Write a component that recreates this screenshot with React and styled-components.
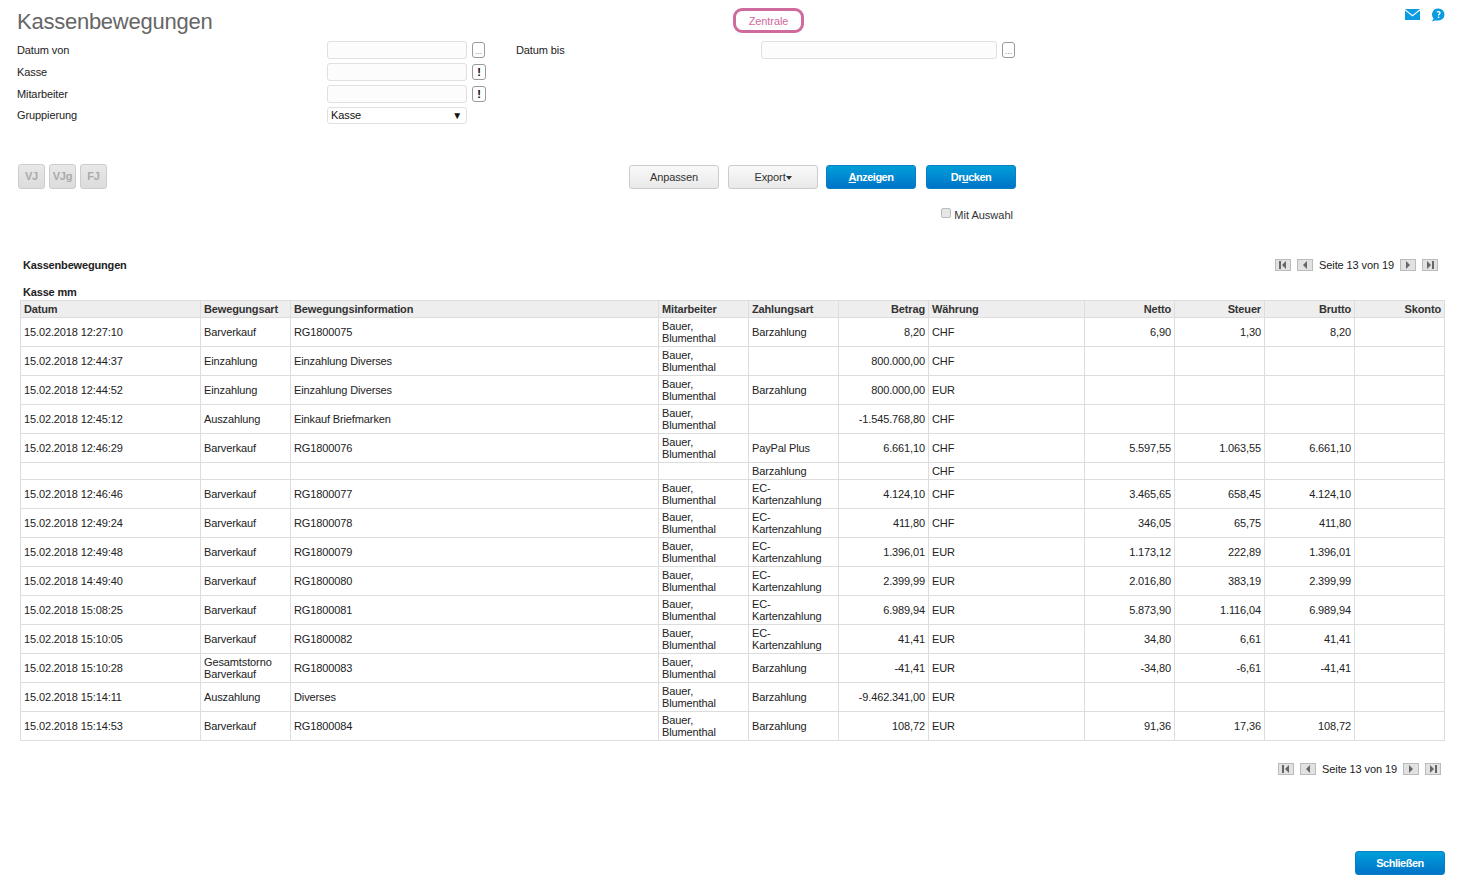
import React from "react";
import styled, { createGlobalStyle } from "styled-components";

const rows = [
  { datum: "15.02.2018 12:27:10", art: "Barverkauf", info: "RG1800075", ma: true, zahl: "Barzahlung", betrag: "8,20", wg: "CHF", netto: "6,90", steuer: "1,30", brutto: "8,20" },
  { datum: "15.02.2018 12:44:37", art: "Einzahlung", info: "Einzahlung Diverses", ma: true, betrag: "800.000,00", wg: "CHF" },
  { datum: "15.02.2018 12:44:52", art: "Einzahlung", info: "Einzahlung Diverses", ma: true, zahl: "Barzahlung", betrag: "800.000,00", wg: "EUR" },
  { datum: "15.02.2018 12:45:12", art: "Auszahlung", info: "Einkauf Briefmarken", ma: true, betrag: "-1.545.768,80", wg: "CHF" },
  { datum: "15.02.2018 12:46:29", art: "Barverkauf", info: "RG1800076", ma: true, zahl: "PayPal Plus", betrag: "6.661,10", wg: "CHF", netto: "5.597,55", steuer: "1.063,55", brutto: "6.661,10" },
  { zahl: "Barzahlung", wg: "CHF", sub: true },
  { datum: "15.02.2018 12:46:46", art: "Barverkauf", info: "RG1800077", ma: true, zahl: "EC-Kartenzahlung", betrag: "4.124,10", wg: "CHF", netto: "3.465,65", steuer: "658,45", brutto: "4.124,10" },
  { datum: "15.02.2018 12:49:24", art: "Barverkauf", info: "RG1800078", ma: true, zahl: "EC-Kartenzahlung", betrag: "411,80", wg: "CHF", netto: "346,05", steuer: "65,75", brutto: "411,80" },
  { datum: "15.02.2018 12:49:48", art: "Barverkauf", info: "RG1800079", ma: true, zahl: "EC-Kartenzahlung", betrag: "1.396,01", wg: "EUR", netto: "1.173,12", steuer: "222,89", brutto: "1.396,01" },
  { datum: "15.02.2018 14:49:40", art: "Barverkauf", info: "RG1800080", ma: true, zahl: "EC-Kartenzahlung", betrag: "2.399,99", wg: "EUR", netto: "2.016,80", steuer: "383,19", brutto: "2.399,99" },
  { datum: "15.02.2018 15:08:25", art: "Barverkauf", info: "RG1800081", ma: true, zahl: "EC-Kartenzahlung", betrag: "6.989,94", wg: "EUR", netto: "5.873,90", steuer: "1.116,04", brutto: "6.989,94" },
  { datum: "15.02.2018 15:10:05", art: "Barverkauf", info: "RG1800082", ma: true, zahl: "EC-Kartenzahlung", betrag: "41,41", wg: "EUR", netto: "34,80", steuer: "6,61", brutto: "41,41" },
  { datum: "15.02.2018 15:10:28", art: "Gesamtstorno Barverkauf", info: "RG1800083", ma: true, zahl: "Barzahlung", betrag: "-41,41", wg: "EUR", netto: "-34,80", steuer: "-6,61", brutto: "-41,41" },
  { datum: "15.02.2018 15:14:11", art: "Auszahlung", info: "Diverses", ma: true, zahl: "Barzahlung", betrag: "-9.462.341,00", wg: "EUR" },
  { datum: "15.02.2018 15:14:53", art: "Barverkauf", info: "RG1800084", ma: true, zahl: "Barzahlung", betrag: "108,72", wg: "EUR", netto: "91,36", steuer: "17,36", brutto: "108,72" },
];

const columns = [180, 90, 368, 90, 90, 90, 156, 90, 90, 90, 90];

const GlobalStyle = createGlobalStyle`
  html, body {
    margin: 0;
    padding: 0;
    background: #fff;
  }
  body {
    font-family: "Liberation Sans", Arial, sans-serif;
    font-size: 11px;
    letter-spacing: -0.1px;
    color: #222;
  }
`;

const Page = styled.div`
  width: 1458px;
  height: 880px;
  overflow: hidden;
  box-sizing: border-box;
  padding: 8px 13px 0 17px;
`;

const Header = styled.header`
  display: grid;
  grid-template-columns: 716px 71px 1fr;
  height: 31px;
`;

const Title = styled.h1`
  margin: 0;
  font-size: 22px;
  font-weight: normal;
  letter-spacing: -0.25px;
  line-height: 28px;
  color: #666;
`;

const Badge = styled.div`
  box-sizing: border-box;
  height: 25px;
  border: 3px solid #cf6a9d;
  border-radius: 9px;
  color: #cf6a9d;
  line-height: 20px;
  text-align: center;
`;

const TopIcons = styled.div`
  display: flex;
  justify-content: flex-end;
  gap: 11px;
  svg {
    display: block;
  }
`;

const FormGrid = styled.div`
  display: grid;
  grid-template-columns: 310px 140px 49px 245px 236px 20px;
  grid-template-rows: 22px 22px 22px 20px;
  align-items: center;
`;

const Label = styled.label`
  grid-column: ${(p) => p.$col || 1};
`;

const Field = styled.input`
  box-sizing: border-box;
  width: 100%;
  height: 18px;
  margin: 0;
  border: 1px solid #e0e0e0;
  border-radius: 3px;
  background: #fcfcfc;
`;

const FakeSelect = styled.div`
  box-sizing: border-box;
  height: 17px;
  margin-top: 1px;
  display: flex;
  align-items: center;
  justify-content: space-between;
  padding: 0 4px 1px 3px;
  border: 1px solid #e0e0e0;
  border-radius: 3px;
  color: #111;
  font-size: 11px;
  span:last-child {
    font-size: 10px;
  }
`;

const SmallButton = styled.button`
  display: flex;
  align-items: ${(p) => (p.$bold ? "center" : "flex-end")};
  justify-content: center;
  box-sizing: border-box;
  width: ${(p) => (p.$bold ? 14 : 13)}px;
  height: 16px;
  margin: 0 0 0 5px;
  padding: 0;
  border: 1px solid #999;
  border-radius: 3px;
  background: #fff;
  color: ${(p) => (p.$bold ? "#000" : "#888")};
  font-family: inherit;
  font-size: ${(p) => (p.$bold ? 11 : 9)}px;
  font-weight: ${(p) => (p.$bold ? "bold" : "normal")};
  line-height: 12px;
`;

const Toolbar = styled.div`
  display: flex;
  align-items: center;
  margin-top: 39px;
  width: 999px;
  height: 25px;
`;

const JournalGroup = styled.div`
  display: flex;
  gap: 4px;
  margin-left: 1px;
  margin-right: auto;
`;

const JournalButton = styled.button`
  box-sizing: border-box;
  width: 27px;
  height: 25px;
  padding: 0 0 2px;
  border: 1px solid #ccc;
  border-radius: 3px;
  background: linear-gradient(#e8e8e8, #dcdcdc);
  color: #aaa;
  font-family: inherit;
  font-size: 11px;
  font-weight: bold;
  letter-spacing: -0.2px;
`;

const ActionGroup = styled.div`
  display: flex;
  align-items: flex-end;
  height: 25px;
`;

const ActionButton = styled.button`
  box-sizing: border-box;
  width: 90px;
  height: 24px;
  margin-left: ${(p) => p.$gap || 0}px;
  padding: 0;
  border: 1px solid ${(p) => (p.$primary ? "#0a7fc4" : "#ccc")};
  border-radius: 3px;
  background: ${(p) =>
    p.$primary ? "linear-gradient(#009fd9, #0073c8)" : "linear-gradient(#f9f9f9, #e9e9e9)"};
  color: ${(p) => (p.$primary ? "#fff" : "#333")};
  font-family: inherit;
  font-size: 11px;
  font-weight: ${(p) => (p.$primary ? "bold" : "normal")};
  letter-spacing: ${(p) => (p.$primary ? "-0.5px" : "-0.1px")};
`;

const Caret = styled.span`
  display: inline-block;
  margin-bottom: 1px;
  vertical-align: middle;
  border-left: 3px solid transparent;
  border-right: 3px solid transparent;
  border-top: 4px solid #333;
`;

const CheckRow = styled.label`
  display: flex;
  justify-content: flex-end;
  align-items: flex-start;
  width: 996px;
  height: 16px;
  margin-top: 18px;
  line-height: 16px;
  letter-spacing: 0;
  color: #333;
`;

const CheckBox = styled.input`
  appearance: none;
  box-sizing: border-box;
  width: 10px;
  height: 10px;
  margin: 1px 3px 0 0;
  border: 1px solid #bbb;
  border-radius: 2px;
  background: #e6e6e6;
`;

const ReportBar = styled.div`
  display: flex;
  justify-content: space-between;
  align-items: center;
  height: 16px;
  margin-top: 34px;
  padding: 0 7px 0 6px;
`;

const ReportTitle = styled.div`
  font-weight: bold;
  letter-spacing: -0.17px;
  color: #222;
`;

const GroupTitle = styled(ReportTitle)`
  height: 14px;
  margin: 12px 0 0 6px;
  line-height: 14px;
`;

const PagerWrap = styled.div`
  display: flex;
  align-items: center;
  gap: 6px;
`;

const PagerText = styled.span`
  color: #222;
`;

const PagerButton = styled.button`
  box-sizing: border-box;
  display: flex;
  align-items: center;
  justify-content: center;
  width: 16px;
  height: 12px;
  padding: 0;
  border: 1px solid #bbb;
  background: #e2e2e2;
  svg {
    display: block;
  }
`;

const Table = styled.table`
  table-layout: fixed;
  border-collapse: collapse;
  width: 1424px;
  margin-left: 3px;
  margin-top: 1px;
  border: 1px solid #ddd;
`;

const HeadCell = styled.th`
  box-sizing: border-box;
  height: 17px;
  padding: 0 3px;
  border: 1px solid #ddd;
  background: #eee;
  color: #333;
  font-size: 11px;
  font-weight: bold;
  letter-spacing: -0.15px;
  text-align: ${(p) => (p.$right ? "right" : "left")};
`;

const Cell = styled.td`
  box-sizing: border-box;
  height: ${(p) => (p.$sub ? 17 : 29)}px;
  padding: 0 3px;
  border: 1px solid #ddd;
  color: #222;
  font-size: 11px;
  letter-spacing: -0.12px;
  line-height: 12px;
  vertical-align: middle;
  text-align: ${(p) => (p.$right ? "right" : "left")};
`;

const BottomPager = styled(ReportBar)`
  margin-top: 20px;
  padding-right: 4px;
`;

const Footer = styled.div`
  display: flex;
  justify-content: flex-end;
  margin-top: 74px;
`;

const Mail = () => (
  <svg width="15" height="11" viewBox="0 0 15 11" style={{ marginTop: 1 }}>
    <path d="M0 0h15L7.5 6z" fill="#0a9be0" />
    <path d="M0 1.6l7.5 6 7.5-6V11H0z" fill="#0a9be0" />
  </svg>
);

const Help = () => (
  <svg width="14" height="14" viewBox="0 0 14 14">
    <path d="M7.500.5a6 6 0 0 1 0 12H4L1 13.500l1.600-3A6 6 0 0 1 7.500.5z" fill="#0a9be0" />
    <path d="M6 4.200c.4-.8 3-1 3 .6 0 1.200-1.500 1.200-1.500 2.600" fill="none" stroke="#fff" strokeWidth="1.400" />
    <rect x="6.800" y="8.600" width="1.500" height="1.500" fill="#fff" />
  </svg>
);

const PagerIcon = ({ type }) => {
  const dark = "#666";
  return (
    <svg width="10" height="8" viewBox="0 0 10 8">
      {type === "first" && (
        <>
          <rect x="1" y="0" width="2" height="8" fill={dark} />
          <path d="M8 0v8L4 4z" fill={dark} />
        </>
      )}
      {type === "prev" && <path d="M7 0v8L3 4z" fill={dark} />}
      {type === "next" && <path d="M3 0v8l4-4z" fill={dark} />}
      {type === "last" && (
        <>
          <path d="M2 0v8l4-4z" fill={dark} />
          <rect x="7" y="0" width="2" height="8" fill={dark} />
        </>
      )}
    </svg>
  );
};

const Pager = () => (
  <PagerWrap>
    <PagerButton>
      <PagerIcon type="first" />
    </PagerButton>
    <PagerButton>
      <PagerIcon type="prev" />
    </PagerButton>
    <PagerText>Seite 13 von 19</PagerText>
    <PagerButton>
      <PagerIcon type="next" />
    </PagerButton>
    <PagerButton>
      <PagerIcon type="last" />
    </PagerButton>
  </PagerWrap>
);

const App = () => {
  return (
    <Page>
      <GlobalStyle />
      <Header>
        <Title>Kassenbewegungen</Title>
        <Badge>Zentrale</Badge>
        <TopIcons>
          <Mail />
          <Help />
        </TopIcons>
      </Header>

      <FormGrid>
        <Label>Datum von</Label>
        <Field />
        <div>
          <SmallButton>...</SmallButton>
        </div>
        <Label $col={4}>Datum bis</Label>
        <Field />
        <div>
          <SmallButton>...</SmallButton>
        </div>

        <Label>Kasse</Label>
        <Field />
        <div>
          <SmallButton $bold>!</SmallButton>
        </div>

        <Label>Mitarbeiter</Label>
        <Field />
        <div>
          <SmallButton $bold>!</SmallButton>
        </div>

        <Label>Gruppierung</Label>
        <FakeSelect>
          <span>Kasse</span>
          <span>▼</span>
        </FakeSelect>
      </FormGrid>

      <Toolbar>
        <JournalGroup>
          <JournalButton>VJ</JournalButton>
          <JournalButton>VJg</JournalButton>
          <JournalButton>FJ</JournalButton>
        </JournalGroup>
        <ActionGroup>
          <ActionButton>Anpassen</ActionButton>
          <ActionButton $gap={9}>
            Export
            <Caret />
          </ActionButton>
          <ActionButton $gap={8} $primary>
            <u>A</u>nzeigen
          </ActionButton>
          <ActionButton $gap={10} $primary>
            Dr<u>u</u>cken
          </ActionButton>
        </ActionGroup>
      </Toolbar>

      <CheckRow>
        <CheckBox type="checkbox" />
        Mit Auswahl
      </CheckRow>

      <ReportBar>
        <ReportTitle>Kassenbewegungen</ReportTitle>
        <Pager />
      </ReportBar>
      <GroupTitle>Kasse mm</GroupTitle>

      <Table>
        <colgroup>
          {columns.map((w, i) => (
            <col key={i} style={{ width: w }} />
          ))}
        </colgroup>
        <thead>
          <tr>
            <HeadCell>Datum</HeadCell>
            <HeadCell>Bewegungsart</HeadCell>
            <HeadCell>Bewegungsinformation</HeadCell>
            <HeadCell>Mitarbeiter</HeadCell>
            <HeadCell>Zahlungsart</HeadCell>
            <HeadCell $right>Betrag</HeadCell>
            <HeadCell>Währung</HeadCell>
            <HeadCell $right>Netto</HeadCell>
            <HeadCell $right>Steuer</HeadCell>
            <HeadCell $right>Brutto</HeadCell>
            <HeadCell $right>Skonto</HeadCell>
          </tr>
        </thead>
        <tbody>
          {rows.map((r, i) => (
            <tr key={i}>
              <Cell $sub={r.sub}>{r.datum}</Cell>
              <Cell $sub={r.sub}>{r.art}</Cell>
              <Cell $sub={r.sub}>{r.info}</Cell>
              <Cell $sub={r.sub}>{r.ma && "Bauer, Blumenthal"}</Cell>
              <Cell $sub={r.sub}>{r.zahl}</Cell>
              <Cell $sub={r.sub} $right>{r.betrag}</Cell>
              <Cell $sub={r.sub}>{r.wg}</Cell>
              <Cell $sub={r.sub} $right>{r.netto}</Cell>
              <Cell $sub={r.sub} $right>{r.steuer}</Cell>
              <Cell $sub={r.sub} $right>{r.brutto}</Cell>
              <Cell $sub={r.sub} $right />
            </tr>
          ))}
        </tbody>
      </Table>

      <BottomPager>
        <span />
        <Pager />
      </BottomPager>

      <Footer>
        <ActionButton $primary>Schließen</ActionButton>
      </Footer>
    </Page>
  );
};

export default App;
